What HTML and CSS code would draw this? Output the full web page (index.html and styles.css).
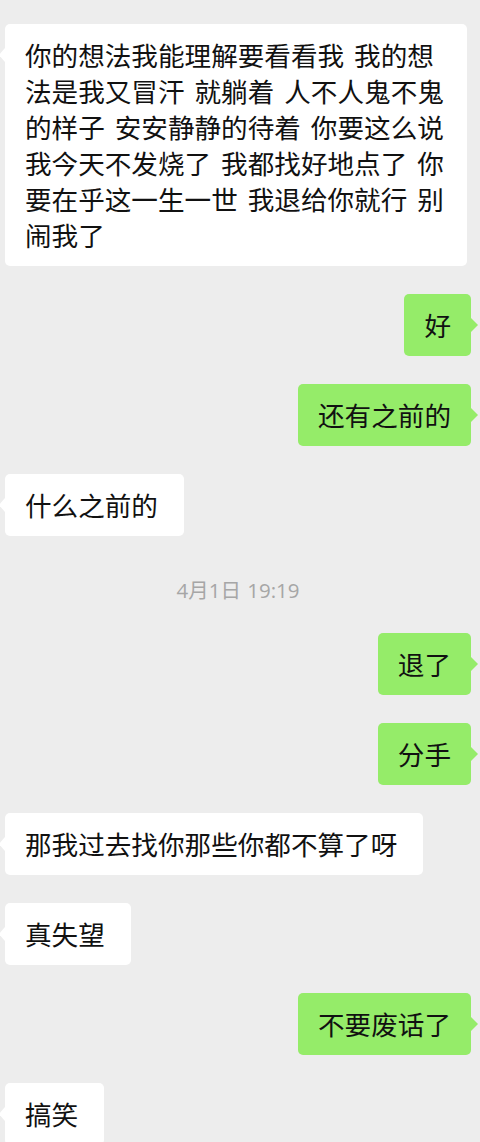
FILE: index.html
```html
<!DOCTYPE html>
<html lang="zh-CN">
<head>
    <meta charset="UTF-8">
    <meta name="viewport" content="width=device-width, initial-scale=1.0">
    <title>聊天记录</title>
    <link rel="stylesheet" href="styles.css">
</head>
<body>
    <div class="chat">
        <div class="msg left">
            <div class="bubble long">你的想法我能理解要看看我 我的想法是我又冒汗 就躺着 人不人鬼不鬼的样子 安安静静的待着 你要这么说我今天不发烧了 我都找好地点了 你要在乎这一生一世 我退给你就行 别闹我了</div>
        </div>
        <div class="msg right">
            <div class="bubble">好</div>
        </div>
        <div class="msg right">
            <div class="bubble">还有之前的</div>
        </div>
        <div class="msg left">
            <div class="bubble">什么之前的</div>
        </div>

        <div class="time">4月1日 19:19</div>

        <div class="msg right">
            <div class="bubble">退了</div>
        </div>
        <div class="msg right">
            <div class="bubble">分手</div>
        </div>
        <div class="msg left">
            <div class="bubble">那我过去找你那些你都不算了呀</div>
        </div>
        <div class="msg left">
            <div class="bubble">真失望</div>
        </div>
        <div class="msg right">
            <div class="bubble">不要废话了</div>
        </div>
        <div class="msg left">
            <div class="bubble">搞笑</div>
        </div>
    </div>
</body>
</html>
```

FILE: styles.css
```css
/* Page */
html, body {
    height: 100%;
}

body {
    margin: 0;
    background: #ededed;
    font-family: "Noto Sans CJK SC", "Noto Sans", sans-serif;
    color: #111;
    overflow: hidden;
}

/* Message list */
.chat {
    display: flex;
    flex-direction: column;
    gap: 28px;
    padding: 24px 9px 0 5px;
}

.msg {
    display: flex;
}

.msg.right {
    justify-content: flex-end;
}

/* Bubbles */
.bubble {
    position: relative;
    max-width: 462px;
    box-sizing: border-box;
    padding: 13px 26px 13px 20px;
    border-radius: 5px;
    background: #fff;
    font-size: 26.6px;
    line-height: 36px;
    word-spacing: 4px;
}

.bubble.long {
    padding-right: 18px;
}

.right .bubble {
    background: #95ec69;
    padding: 13px 20px 13px 20px;
}

/* little tails */
.bubble::before {
    content: "";
    position: absolute;
    top: 24px;
    border-top: 7px solid transparent;
    border-bottom: 7px solid transparent;
}

.left .bubble::before {
    left: -6px;
    border-right: 6px solid #fff;
}

.right .bubble::before {
    right: -7px;
    border-left: 7px solid #95ec69;
}

/* Timestamp */
.time {
    margin: 13px 0 2px;
    text-align: center;
    font-family: "Open Sans", "Noto Sans CJK SC", sans-serif;
    font-size: 20.5px;
    line-height: 26px;
    color: #a6a6a6;
    word-spacing: 1px;
}
```
